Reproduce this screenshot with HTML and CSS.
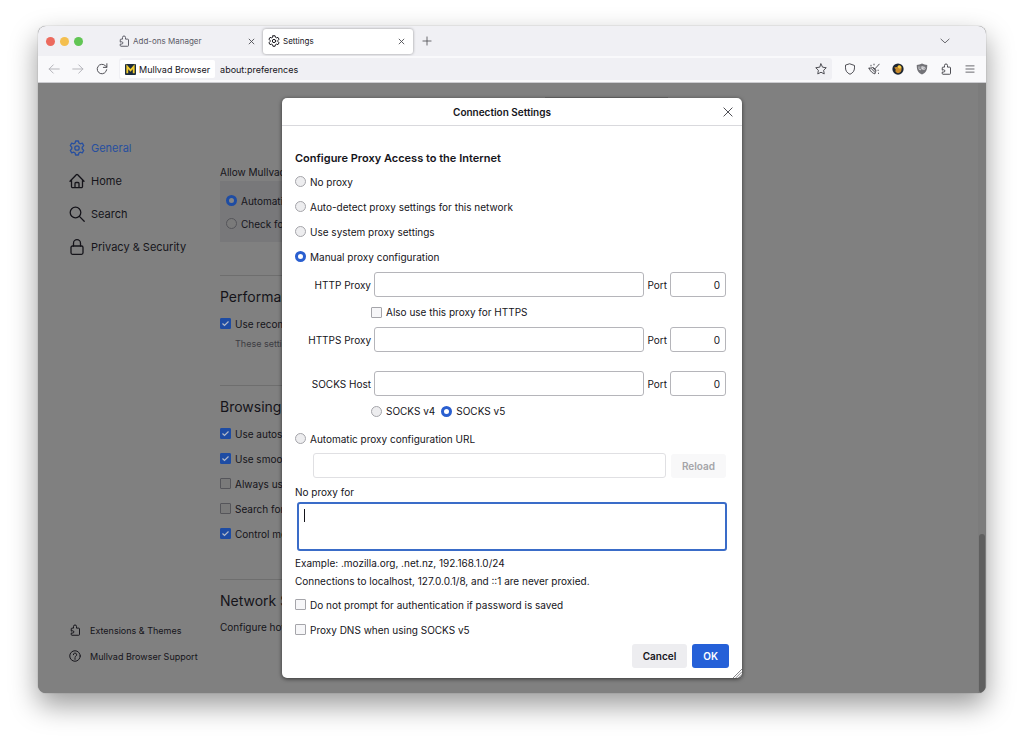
FILE: index.html
```html
<!DOCTYPE html>
<html lang="en">
<head>
  <meta charset="UTF-8">
  <meta name="viewport" content="width=device-width, initial-scale=1.0">
  <title>Settings</title>
  <link rel="stylesheet" href="styles.css">
</head>
<body>
  <!-- Shared icons -->
  <svg class="sprite" aria-hidden="true">
    <symbol id="i-puzzle" viewBox="0 0 16 16"><path d="M3 9V6.500a1 1 0 0 1 1-1h2V3.300a2 2 0 0 1 4 0v2.200h3a1 1 0 0 1 1 1V14a1 1 0 0 1-1 1H4a1 1 0 0 1-1-1v-2h2a1.500 1.500 0 0 0 0-3z"/></symbol>
    <symbol id="i-gear" viewBox="0 0 16 16"><path d="M6.600 1h2.800l.5 2 1.300.8 2.100-.6 1.400 2.400L13.200 7.200v1.600l1.500 1.600-1.400 2.400-2.100-.6-1.300.8-.5 2H6.600l-.5-2-1.300-.8-2.100.6-1.400-2.400 1.500-1.600V7.200L1.300 5.600l1.400-2.400 2.100.6L6.100 3z"/><circle cx="8" cy="8" r="2.200"/></symbol>
    <symbol id="i-home" viewBox="0 0 16 16"><path d="M1 8.200 7.300 1.700a1 1 0 0 1 1.400 0L15 8.200M2.500 7v6.500a1.200 1.200 0 0 0 1.200 1.200h8.600a1.200 1.200 0 0 0 1.200-1.200V7M6 14.500v-4a1 1 0 0 1 1-1h2a1 1 0 0 1 1 1v4"/></symbol>
    <symbol id="i-search" viewBox="0 0 16 16"><circle cx="6.500" cy="6.500" r="5.300"/><path d="m10.400 10.400 4.800 4.800"/></symbol>
    <symbol id="i-lock" viewBox="0 0 16 16"><rect x="2" y="7" width="12" height="8.300" rx="1.500"/><path d="M4.500 7V4.200a3.500 3.500 0 0 1 7 0V7"/></symbol>
    <symbol id="i-help" viewBox="0 0 16 16"><circle cx="8" cy="8" r="7"/><path d="M5.800 6.300a2.200 2.200 0 1 1 3.300 1.900C8.300 8.700 8 9 8 9.800M8 11.300v1.200"/></symbol>
    <symbol id="i-close" viewBox="0 0 16 16"><path d="m2.500 2.500 11 11m0-11-11 11"/></symbol>
    <symbol id="i-plus" viewBox="0 0 16 16"><path d="M8 1.500v13M1.500 8h13"/></symbol>
    <symbol id="i-chevron" viewBox="0 0 16 16"><path d="m1.500 5 6.500 6 6.500-6"/></symbol>
    <symbol id="i-back" viewBox="0 0 16 16"><path d="M15 8H1.500M7 2.500 1.500 8 7 13.500"/></symbol>
    <symbol id="i-forward" viewBox="0 0 16 16"><path d="M1 8h13.500M9 2.500 14.500 8 9 13.500"/></symbol>
    <symbol id="i-reload" viewBox="0 0 16 16"><path d="M14.200 9A6.300 6.300 0 1 1 12.500 3.700L14.500 5.500M14.500 1v4.800H9.800"/></symbol>
    <symbol id="i-star" viewBox="0 0 16 16"><path d="m8 1.200 2.100 4.400 4.900.7-3.500 3.400.8 4.900L8 12.300l-4.300 2.300.8-4.900L1 6.300l4.900-.7z"/></symbol>
    <symbol id="i-shield" viewBox="0 0 16 16"><path d="M8 1.200 14 3.300v3.200c0 4-2.200 6.900-6 8.500-3.800-1.600-6-4.500-6-8.500V3.300z"/></symbol>
    <symbol id="i-menu" viewBox="0 0 16 16"><path d="M1.500 3h13M1.500 8h13M1.500 13h13"/></symbol>
    <symbol id="i-broom" viewBox="0 0 16 16"><path d="M15 1.500 9.500 7.500"/><path d="M1.500 7c2.500 0 4.500-1.500 6-.8l2.800 2.800c.7 1.500-.8 3.500-1 5.500-3-.5-6.500-3.500-7.800-7.500z"/><path d="m4.500 7.500 4.800 5M7 7l3 3.500"/><path d="M4 3v1M8 1.500v1M14 13.500v.500M13.500 9.500v.500"/></symbol>
  </svg>

  <div class="window">
    <!-- Tab strip -->
    <header class="tab-strip">
      <div class="lights">
        <span class="light red"></span>
        <span class="light yellow"></span>
        <span class="light green"></span>
      </div>
      <div class="tab">
        <svg class="icon"><use href="#i-puzzle"/></svg>
        <span class="tab-title">Add-ons Manager</span>
        <button class="icon-button" aria-label="Close tab"><svg class="icon small"><use href="#i-close"/></svg></button>
      </div>
      <div class="tab active">
        <svg class="icon"><use href="#i-gear"/></svg>
        <span class="tab-title">Settings</span>
        <button class="icon-button" aria-label="Close tab"><svg class="icon small"><use href="#i-close"/></svg></button>
      </div>
      <button class="icon-button new-tab" aria-label="New tab"><svg class="icon mid"><use href="#i-plus"/></svg></button>
      <button class="icon-button all-tabs" aria-label="List all tabs"><svg class="icon mid"><use href="#i-chevron"/></svg></button>
    </header>

    <!-- Navigation toolbar -->
    <div class="toolbar">
      <div class="nav-buttons">
        <button class="icon-button" aria-label="Back" disabled><svg class="icon"><use href="#i-back"/></svg></button>
        <button class="icon-button" aria-label="Forward" disabled><svg class="icon"><use href="#i-forward"/></svg></button>
        <button class="icon-button" aria-label="Reload page"><svg class="icon"><use href="#i-reload"/></svg></button>
      </div>
      <div class="url-bar">
        <span class="identity">
          <svg class="brand" viewBox="0 0 12 12"><rect width="12" height="12" rx="1" fill="#1c2b3d"/><path d="M2.500 10V3L6 7l3.500-4v7" fill="none" stroke="#f3cd2f" stroke-width="2"/></svg>
          Mullvad Browser
        </span>
        <input class="url-input" type="text" value="about:preferences" aria-label="Address">
        <button class="icon-button" aria-label="Bookmark this page"><svg class="icon"><use href="#i-star"/></svg></button>
      </div>
      <div class="tool-buttons">
        <button class="icon-button" aria-label="Security level"><svg class="icon"><use href="#i-shield"/></svg></button>
        <button class="icon-button" aria-label="New identity"><svg class="icon"><use href="#i-broom"/></svg></button>
        <button class="icon-button" aria-label="Mullvad extension">
          <svg class="icon" viewBox="0 0 16 16"><circle cx="8" cy="8" r="7.500" fill="#1d2733" stroke="none"/><path d="M3 6c1-1 3-1 4-.5C7.500 3.500 10 2 12 4c1.500 2 1 6-.5 8-2 2-5 2-6.500 0-.8-1-.3-2.500 0-3.500C4 8 3.500 7 3 6z" fill="#c88a2c" stroke="none"/><path d="M7.500 5c.5-2 3.500-2.500 5 .5l-1.500 2c-2 0-3-1-3.500-2.500z" fill="#f6ce46" stroke="none"/></svg>
        </button>
        <button class="icon-button" aria-label="uBlock Origin">
          <svg class="icon" viewBox="0 0 16 16"><path d="M8 .8c2 1.200 4.500 1.700 7 1.700 0 7-1.500 10-7 12.700C2.500 12.500 1 9.500 1 2.500c2.500 0 5-.5 7-1.700z" fill="#737378" stroke="none"/><path d="M4 5v2.500a1.500 1.500 0 0 0 3 0V5M9 4.500v4M9 7a1.600 1.600 0 1 0 3.200 0A1.600 1.600 0 1 0 9 7" stroke="#f0f0f4" stroke-width="1"/></svg>
        </button>
        <button class="icon-button" aria-label="Extensions"><svg class="icon"><use href="#i-puzzle"/></svg></button>
        <button class="icon-button" aria-label="Application menu"><svg class="icon mid"><use href="#i-menu"/></svg></button>
      </div>
    </div>

    <div class="content">
      <!-- Settings page, dimmed behind the dialog -->
      <div class="page">
        <nav class="sidebar">
          <div class="categories">
            <a class="category selected" href="#general"><svg class="icon large"><use href="#i-gear"/></svg>General</a>
            <a class="category" href="#home"><svg class="icon large"><use href="#i-home"/></svg>Home</a>
            <a class="category" href="#search"><svg class="icon large"><use href="#i-search"/></svg>Search</a>
            <a class="category" href="#privacy"><svg class="icon large"><use href="#i-lock"/></svg>Privacy &amp; Security</a>
          </div>
          <div class="side-links">
            <a href="#addons"><svg class="icon"><use href="#i-puzzle"/></svg>Extensions &amp; Themes</a>
            <a href="#support"><svg class="icon"><use href="#i-help"/></svg>Mullvad Browser Support</a>
          </div>
        </nav>

        <main class="settings">
          <div class="update-history"></div>
          <p class="line allow">Allow Mullvad</p>
          <div class="update-box">
            <label class="option"><input type="radio" name="update" checked>Automatically</label>
            <label class="option"><input type="radio" name="update">Check for</label>
          </div>
          <section class="performance">
            <h2>Performance</h2>
            <label class="option"><input type="checkbox" checked>Use recommended</label>
            <p class="hint">These settings</p>
          </section>
          <section class="browsing">
            <h2>Browsing</h2>
            <label class="option"><input type="checkbox" checked>Use autoscrolling</label>
            <label class="option"><input type="checkbox" checked>Use smooth</label>
            <label class="option"><input type="checkbox">Always use</label>
            <label class="option"><input type="checkbox">Search for</label>
            <label class="option"><input type="checkbox" checked>Control media</label>
          </section>
          <section class="network">
            <h2>Network Settings</h2>
            <p class="line">Configure how</p>
          </section>
        </main>
        <div class="scrollbar"><div class="thumb"></div></div>
      </div>

      <!-- Connection settings dialog -->
      <div class="overlay">
        <form class="dialog" role="dialog" aria-labelledby="dialog-title">
          <div class="dialog-header">
            <h1 id="dialog-title">Connection Settings</h1>
            <button type="button" class="icon-button" aria-label="Close"><svg class="icon"><use href="#i-close"/></svg></button>
          </div>
          <div class="dialog-body">
            <h3>Configure Proxy Access to the Internet</h3>
            <label class="option"><input type="radio" name="proxy">No proxy</label>
            <label class="option"><input type="radio" name="proxy">Auto-detect proxy settings for this network</label>
            <label class="option"><input type="radio" name="proxy">Use system proxy settings</label>
            <label class="option"><input type="radio" name="proxy" checked>Manual proxy configuration</label>

            <div class="proxy-grid">
              <label for="http">HTTP Proxy</label>
              <input id="http" class="field" type="text">
              <label for="http-port">Port</label>
              <input id="http-port" class="field port" type="text" value="0">
              <div class="sub-row">
                <label class="option"><input type="checkbox">Also use this proxy for HTTPS</label>
              </div>
              <label for="https">HTTPS Proxy</label>
              <input id="https" class="field" type="text">
              <label for="https-port">Port</label>
              <input id="https-port" class="field port" type="text" value="0">
              <div class="spacer"></div>
              <label for="socks">SOCKS Host</label>
              <input id="socks" class="field" type="text">
              <label for="socks-port">Port</label>
              <input id="socks-port" class="field port" type="text" value="0">
              <div class="sub-row">
                <label class="option"><input type="radio" name="socks">SOCKS v4</label>
                <label class="option"><input type="radio" name="socks" checked>SOCKS v5</label>
              </div>
            </div>

            <label class="option"><input type="radio" name="proxy">Automatic proxy configuration URL</label>
            <div class="auto-row">
              <input class="field" type="text" aria-label="Automatic proxy configuration URL" disabled>
              <button type="button" class="button" disabled>Reload</button>
            </div>

            <label class="no-proxy-label" for="no-proxy">No proxy for</label>
            <textarea id="no-proxy" class="no-proxy"></textarea>
            <p class="line">Example: .mozilla.org, .net.nz, 192.168.1.0/24</p>
            <p class="line">Connections to localhost, 127.0.0.1/8, and ::1 are never proxied.</p>
            <div class="extra">
              <label class="option"><input type="checkbox">Do not prompt for authentication if password is saved</label>
              <label class="option"><input type="checkbox">Proxy DNS when using SOCKS v5</label>
            </div>
          </div>
          <div class="dialog-footer">
            <button type="button" class="button">Cancel</button>
            <button type="button" class="button primary">OK</button>
          </div>
          <svg class="resizer" viewBox="0 0 10 10"><path d="M0 10 10 0M3 10l7-7M6 10l4-4M9 10l1-1"/></svg>
        </form>
      </div>
    </div>
  </div>
</body>
</html>
```
FILE: styles.css
```css
* {
  box-sizing: border-box;
}

body {
  margin: 0;
  height: 100vh;
  padding: 26px 38px 50px;
  background: #fff;
  color: #15141a;
  font-family: Inter, "Liberation Sans", sans-serif;
  font-size: 10px;
}

h1, h2, h3, p {
  margin: 0;
}

button, input, textarea {
  font: inherit;
  color: inherit;
}

a {
  color: inherit;
  text-decoration: none;
}

/* Icons */
.sprite {
  position: absolute;
  width: 0;
  height: 0;
}

.icon {
  width: 12px;
  height: 12px;
  flex: none;
  fill: none;
  stroke: currentColor;
  stroke-width: 1.3;
  stroke-linecap: round;
  stroke-linejoin: round;
}

.icon.small {
  width: 7px;
  height: 7px;
  stroke-width: 2;
}

.icon.mid {
  width: 10px;
  height: 10px;
}

.icon.large {
  width: 16px;
  height: 16px;
}

.icon-button {
  display: flex;
  align-items: center;
  justify-content: center;
  padding: 0;
  border: none;
  background: none;
  color: #4a4a50;
}

.icon-button:disabled {
  color: #b4b4b9;
}

/* Browser window */
.window {
  display: flex;
  flex-direction: column;
  min-height: 100%;
  border-radius: 8px;
  overflow: hidden;
  background: #808080;
  box-shadow: 0 0 1px rgba(0, 0, 0, 0.5), 0 12px 28px rgba(0, 0, 0, 0.4);
}

.tab-strip {
  display: flex;
  align-items: center;
  height: 30px;
  padding: 0 36px 0 8px;
  background: #f0f0f4;
}

.lights {
  display: flex;
  gap: 5px;
  width: 67px;
}

.light {
  width: 9px;
  height: 9px;
  border-radius: 50%;
}

.red {
  background: #ec6a5e;
}

.yellow {
  background: #f4bf4f;
}

.green {
  background: #61c554;
}

.tab {
  display: flex;
  align-items: center;
  gap: 3px;
  width: 150px;
  height: 25px;
  padding: 0 8px 0 5px;
  font-size: 8px;
  color: #5b5b66;
}

.tab-title {
  flex: 1;
}

.tab.active {
  background: #fff;
  color: #15141a;
  border-radius: 3px;
  box-shadow: 0 0 3px rgba(0, 0, 0, 0.4);
}

.new-tab {
  margin-left: 9px;
}

.all-tabs {
  margin-left: auto;
}

.toolbar {
  display: flex;
  align-items: center;
  height: 27px;
  padding: 0 10px;
  background: #f9f9fb;
  border-bottom: 1px solid #ccccd0;
}

.nav-buttons {
  display: flex;
  gap: 12px;
  width: 71px;
}

.url-bar {
  display: flex;
  align-items: center;
  flex: 1;
  height: 22px;
  padding: 0 5px 0 1px;
  border-radius: 3px;
  background: #f0f0f4;
  font-size: 9px;
}

.identity {
  display: flex;
  align-items: center;
  gap: 3px;
  height: 18px;
  padding: 0 5px;
  background: #fff;
  border-radius: 2px;
}

.brand {
  width: 11px;
  height: 11px;
}

.url-input {
  flex: 1;
  min-width: 0;
  padding: 0 5px;
  border: none;
  background: none;
}

.tool-buttons {
  display: flex;
  align-items: center;
  gap: 12px;
  padding-left: 12px;
}

.tool-buttons .icon-button {
  width: 12px;
}

/* Settings page */
.content {
  position: relative;
  display: flex;
  flex: 1;
}

.page {
  display: flex;
  flex: 1;
}

.sidebar {
  display: flex;
  flex-direction: column;
  justify-content: space-between;
  width: 182px;
  padding: 48px 0 24px 31px;
}

.categories {
  display: flex;
  flex-direction: column;
  font-size: 11px;
}

.category {
  display: flex;
  align-items: center;
  gap: 6px;
  height: 33px;
}

.category.selected {
  color: #274f9f;
}

.side-links {
  display: flex;
  flex-direction: column;
  font-size: 9px;
}

.side-links a {
  display: flex;
  align-items: center;
  gap: 9px;
  height: 26px;
}

.settings {
  flex: 1;
  max-width: 460px;
}

.update-history {
  width: 123px;
  height: 26px;
  margin: -11px 12px 0 auto;
  border-bottom: 1px solid #6c6c6c;
}

.line {
  line-height: 18px;
}

.allow {
  margin-top: 65px;
}

.update-box {
  padding: 8px 6px 7px;
  background: #78787a;
}

.update-box .option {
  height: 23px;
}

.settings section {
  border-top: 1px solid #6e6e6e;
}

.settings h2 {
  padding-top: 11px;
  margin-bottom: 5px;
  font-size: 14px;
  line-height: 19px;
  font-weight: 400;
}

.performance {
  height: 110px;
  margin-top: 33px;
}

.browsing {
  height: 194px;
}

.hint {
  padding-left: 15px;
  font-size: 9px;
  line-height: 16px;
  color: #3c3c42;
}

.network .line {
  margin-top: 8px;
}

.scrollbar {
  display: flex;
  align-items: flex-end;
  width: 8px;
  margin-left: auto;
  padding: 0 1px;
  background: #7c7c7c;
}

.thumb {
  width: 6px;
  height: 26%;
  border-radius: 3px;
  background: #5f5f5f;
}

/* Radios and checkboxes */
.option {
  display: flex;
  align-items: center;
  gap: 4px;
  height: 25px;
  white-space: nowrap;
}

input[type="radio"],
input[type="checkbox"] {
  appearance: none;
  flex: none;
  width: 11px;
  height: 11px;
  margin: 0;
  border: 1px solid #a5a5aa;
  background: #ededef;
}

input[type="radio"] {
  border-radius: 50%;
}

input[type="checkbox"] {
  border-radius: 1px;
  background: #f6f6f8;
}

input[type="radio"]:checked {
  border: 3px solid #2a5fd0;
  background: #fff;
}

.settings input[type] {
  background: #7a7a7a;
  border-color: #55555a;
}

.settings input[type="radio"]:checked {
  border-color: #1e4ca3;
  background: #858585;
}

.settings input[type="checkbox"]:checked {
  border-color: #1e4ca3;
  background: #1e4ca3 url("data:image/svg+xml,%3Csvg xmlns='http://www.w3.org/2000/svg' viewBox='0 0 9 9'%3E%3Cpath d='M1.500 4.500l2 2 4-4' fill='none' stroke='%23b0b8c8' stroke-width='1.200'/%3E%3C/svg%3E");
}

/* Dialog */
.overlay {
  position: absolute;
  inset: 0;
  display: grid;
  place-items: center;
}

.dialog {
  position: relative;
  width: 460px;
  max-width: 100%;
  border-radius: 5px;
  background: #fff;
  box-shadow: 0 1px 4px rgba(0, 0, 0, 0.6);
}

.dialog-header {
  display: flex;
  align-items: center;
  height: 28px;
  padding-right: 8px;
  border-bottom: 1px solid #d9d9dd;
}

.dialog-header h1 {
  flex: 1;
  text-align: center;
  font-size: 10px;
  font-weight: 600;
}

.dialog-body {
  padding: 24px 16px 0 13px;
}

.dialog-body h3 {
  margin-bottom: 3px;
  font-size: 11px;
  line-height: 16px;
  font-weight: 600;
}

.field {
  width: 100%;
  min-width: 0;
  height: 25px;
  padding: 0 5px;
  border: 1px solid #b5b5ba;
  border-radius: 3px;
  background: #fff;
}

.field:disabled {
  border-color: #e0e0e3;
}

.port {
  text-align: right;
}

.proxy-grid {
  display: grid;
  grid-template-columns: 76px 1fr auto 56px;
  column-gap: 3px;
  align-items: center;
  margin-top: 3px;
}

.proxy-grid > label {
  text-align: right;
}

.sub-row {
  display: flex;
  grid-column: 1 / -1;
  align-items: center;
  gap: 6px;
  height: 30px;
  padding-left: 76px;
}

.spacer {
  grid-column: 1 / -1;
  height: 19px;
}

.auto-row {
  display: flex;
  align-items: center;
  gap: 5px;
  margin-top: 2px;
  padding-left: 18px;
}

.no-proxy-label {
  display: block;
  margin-top: 5px;
  line-height: 18px;
}

/* Focused box, with the text cursor at its start */
.no-proxy {
  display: block;
  width: 430px;
  max-width: 100%;
  height: 49px;
  margin: 1px 0 3px 2px;
  padding: 5px;
  border: 2px solid #3a6cc8;
  border-radius: 3px;
  outline: none;
  resize: none;
  background: linear-gradient(#15141a, #15141a) 5px 5px / 1px 13px no-repeat #fff;
}

.extra {
  margin-top: 2px;
}

.button {
  height: 24px;
  padding: 0 11px;
  border: none;
  border-radius: 3px;
  background: #ededf0;
  font-weight: 600;
}

.button:disabled {
  background: #f8f8f9;
  color: #a4a4a8;
}

.button.primary {
  background: #2560d8;
  color: #fff;
}

.dialog-footer {
  display: flex;
  justify-content: flex-end;
  gap: 5px;
  padding: 2px 13px 10px;
}

.resizer {
  position: absolute;
  right: 0;
  bottom: 0;
  width: 9px;
  height: 9px;
  stroke: #77777c;
  stroke-width: 1;
}
```
